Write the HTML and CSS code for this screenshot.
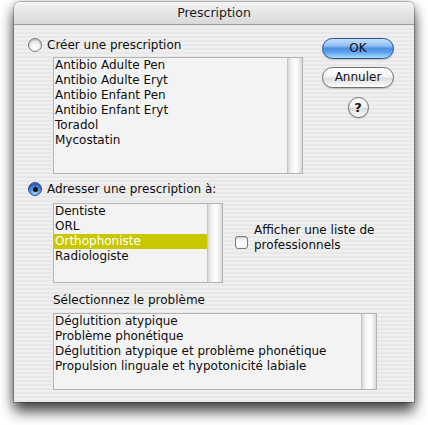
FILE: index.html
```html
<!DOCTYPE html>
<html lang="fr">
<head>
<meta charset="utf-8">
<title>Prescription</title>
<link rel="stylesheet" href="styles.css">
</head>
<body>
<div class="window">
  <div class="titlebar">Prescription</div>
  <div class="content">
    <div class="top">
      <div class="main">
        <div class="radio-row">
          <span class="radio"></span>
          <span class="radio-label">Créer une prescription</span>
        </div>
        <div class="list list-1">
          <ul class="items">
            <li>Antibio Adulte Pen</li>
            <li>Antibio Adulte Eryt</li>
            <li>Antibio Enfant Pen</li>
            <li>Antibio Enfant Eryt</li>
            <li>Toradol</li>
            <li>Mycostatin</li>
          </ul>
          <div class="track"></div>
        </div>
      </div>
      <div class="buttons">
        <button class="btn btn-default">OK</button>
        <button class="btn">Annuler</button>
        <button class="help">?</button>
      </div>
    </div>

    <div class="radio-row radio-row-2">
      <span class="radio radio-on"></span>
      <span class="radio-label">Adresser une prescription à:</span>
    </div>

    <div class="row-2">
      <div class="list list-2">
        <ul class="items">
          <li>Dentiste</li>
          <li>ORL</li>
          <li class="selected">Orthophoniste</li>
          <li>Radiologiste</li>
        </ul>
        <div class="track"></div>
      </div>
      <div class="check-group">
        <span class="checkbox"></span>
        <span class="check-label">Afficher une liste de<br>professionnels</span>
      </div>
    </div>

    <div class="section-label">Sélectionnez le problème</div>
    <div class="list list-3">
      <ul class="items">
        <li>Déglutition atypique</li>
        <li>Problème phonétique</li>
        <li>Déglutition atypique et problème phonétique</li>
        <li>Propulsion linguale et hypotonicité labiale</li>
      </ul>
      <div class="track"></div>
    </div>
  </div>
</div>
</body>
</html>
```

FILE: styles.css
```css
html, body {
  margin: 0;
  padding: 0;
  background: #ffffff;
}

body {
  min-height: 425px;
  padding-top: 2px;
  box-sizing: border-box;
  font-family: "DejaVu Sans", "Liberation Sans", sans-serif;
  font-size: 12px;
  color: #0d0d0d;
}

.window {
  width: 400px;
  height: 400px;
  margin-left: 14px;
  border-radius: 6px 6px 0 0;
  background: repeating-linear-gradient(to bottom, #efefef 0, #efefef 2px, #e8e8e8 2px, #e8e8e8 4px);
  box-shadow: 0 0 0 1px rgba(0, 0, 0, 0.2), 0 2px 12px rgba(0, 0, 0, 0.35), 0 10px 14px rgba(0, 0, 0, 0.65);
  overflow: hidden;
}

.titlebar {
  height: 22px;
  line-height: 22px;
  text-align: center;
  font-size: 12.5px;
  color: #1a1a1a;
  background: linear-gradient(to bottom, #f3f3f3, #e3e3e3 60%, #d8d8d8);
  border-bottom: 1px solid #9d9d9d;
  border-radius: 6px 6px 0 0;
}

.content {
  padding: 12px 0 0 14px;
}

.top {
  display: flex;
}

.main {
  width: 294px;
}

.radio-row {
  display: flex;
  align-items: center;
  gap: 5px;
  height: 16px;
}

.radio-row-2 {
  margin-top: 7px;
}

.radio {
  width: 12px;
  height: 12px;
  border-radius: 50%;
  border: 1px solid #7a7a7a;
  background: radial-gradient(circle at 50% 75%, #ffffff 0, #f2f2f2 40%, #cdcdcd 100%);
  box-shadow: inset 0 1px 1px rgba(0, 0, 0, 0.18);
  display: flex;
  align-items: center;
  justify-content: center;
  flex: none;
}

.radio-on {
  border-color: #2d4f8c;
  background: radial-gradient(circle at 50% 85%, #9fd0ff 0, #4f8fe0 45%, #2f63c0 75%, #6f9fe0 100%);
}

.radio-on::after {
  content: "";
  width: 5px;
  height: 5px;
  border-radius: 50%;
  background: #111;
}

.list {
  display: flex;
  border: 1px solid #b3b3b3;
  background: #f3f3f3;
  box-sizing: border-box;
}

.items {
  list-style: none;
  margin: 0;
  padding: 0;
  flex: 1;
}

.items li {
  height: 15px;
  line-height: 15px;
  padding-left: 1px;
  white-space: nowrap;
}

.items li.selected {
  background: #c9c700;
  color: #ffffff;
}

.track {
  width: 15px;
  flex: none;
  background: linear-gradient(to right, #bcbcbc 0, #e2e2e2 2px, #f8f8f8 6px, #ffffff 9px, #f0f0f0 12px, #d6d6d6 15px);
}

.list-1 {
  margin: 4px 0 0 25px;
  width: 250px;
  height: 117px;
}

.row-2 {
  display: flex;
  margin-top: 6px;
}

.list-2 {
  margin-left: 25px;
  width: 170px;
  height: 80px;
}

.check-group {
  display: flex;
  gap: 6px;
  margin: 20px 0 0 12px;
}

.checkbox {
  width: 11px;
  height: 11px;
  margin-top: 13px;
  border: 1px solid #7b7b7b;
  border-radius: 3px;
  background: linear-gradient(to bottom, #e8e8e8, #ffffff 60%, #f2f2f2);
  box-shadow: inset 0 1px 1px rgba(0, 0, 0, 0.12);
  flex: none;
}

.check-label {
  line-height: 15px;
}

.section-label {
  margin: 10px 0 0 25px;
  line-height: 15px;
  height: 15px;
}

.list-3 {
  margin: 5px 0 0 25px;
  width: 324px;
  height: 77px;
}

.buttons {
  width: 72px;
  padding-top: 1px;
  display: flex;
  flex-direction: column;
  align-items: center;
}

.btn {
  width: 72px;
  height: 21px;
  margin: 0;
  padding: 0;
  border-radius: 11px;
  border: 1px solid #6f6f6f;
  font-family: "DejaVu Sans", "Liberation Sans", sans-serif;
  font-size: 12px;
  color: #111;
  line-height: 19px;
  background: linear-gradient(to bottom, #ffffff 0, #f4f4f4 45%, #dedede 55%, #f2f2f2 85%, #ffffff 100%);
  box-shadow: 0 1px 1px rgba(0, 0, 0, 0.18);
}

.btn + .btn {
  margin-top: 8px;
}

.btn-default {
  border-color: #2c4f93;
  background: linear-gradient(to bottom, #c4e0ff 0, #8fbff4 35%, #4d8fe3 50%, #5fa2ee 70%, #a6dcff 100%);
}

.help {
  width: 21px;
  height: 21px;
  margin-top: 9px;
  padding: 0;
  border-radius: 50%;
  border: 1px solid #6f6f6f;
  font-family: "DejaVu Sans", "Liberation Sans", sans-serif;
  font-weight: bold;
  font-size: 13px;
  line-height: 19px;
  color: #111;
  background: linear-gradient(to bottom, #ffffff 0, #f2f2f2 45%, #dcdcdc 55%, #f4f4f4 90%, #ffffff 100%);
  box-shadow: 0 1px 1px rgba(0, 0, 0, 0.2);
}
```
